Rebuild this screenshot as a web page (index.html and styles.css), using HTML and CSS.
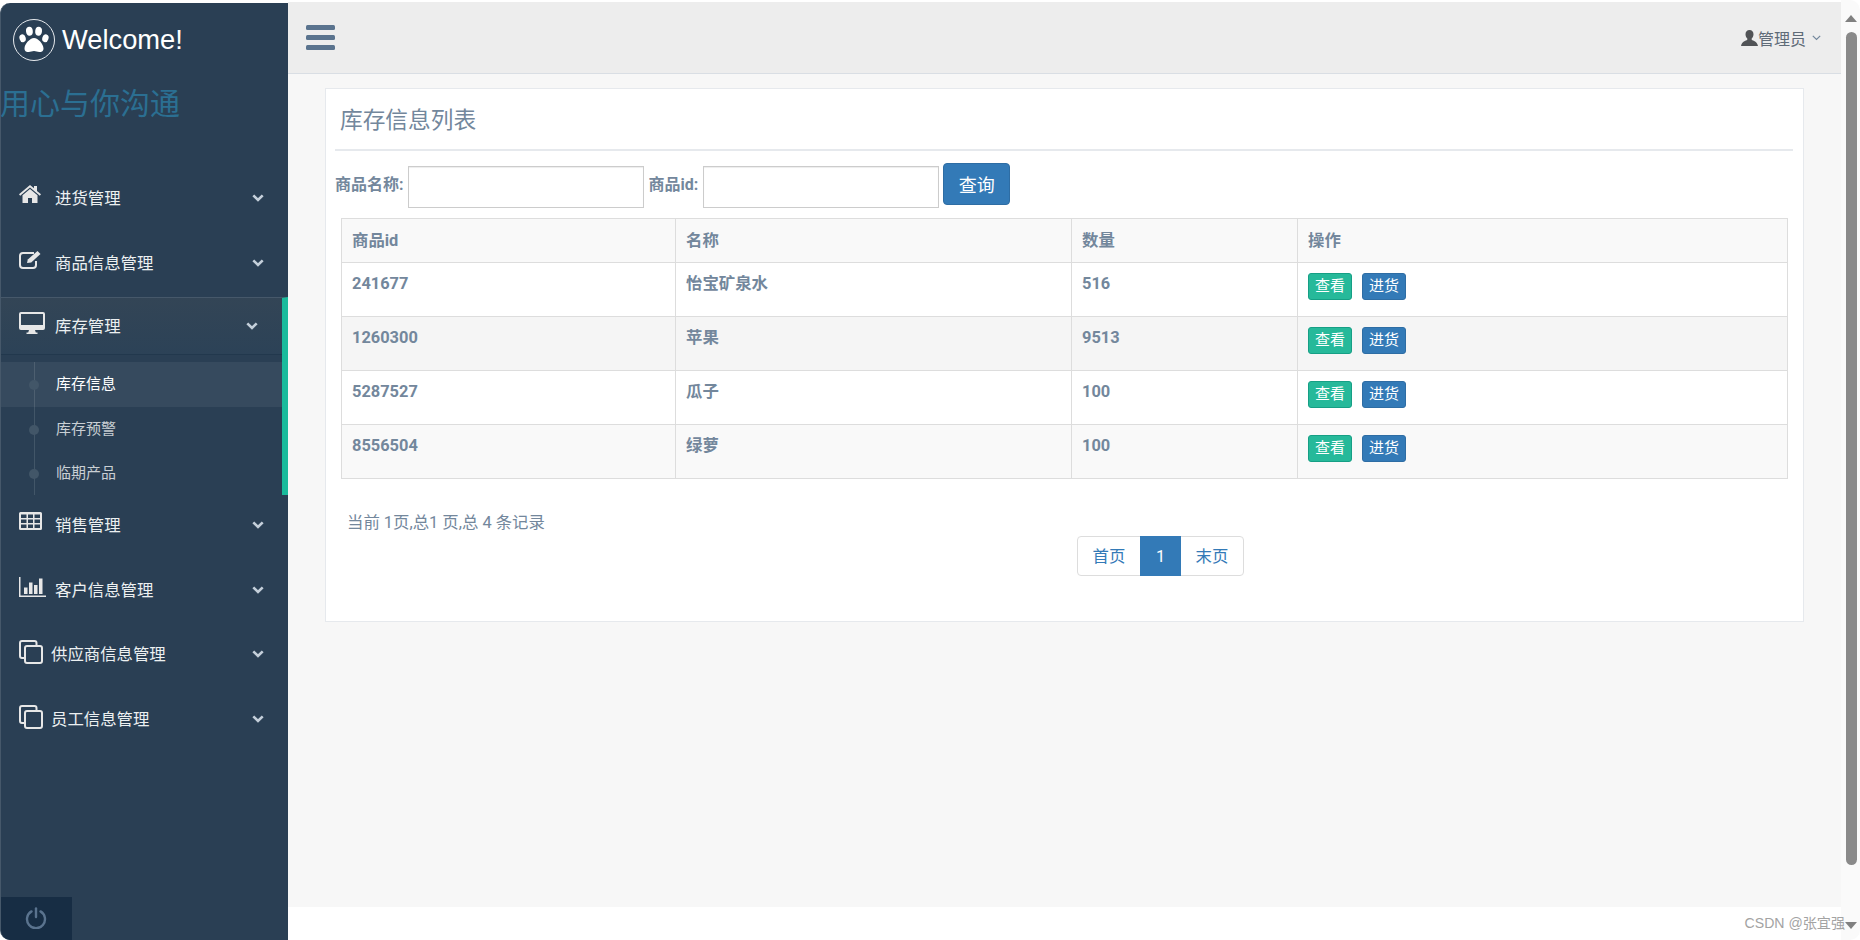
FILE: index.html

```html
<!DOCTYPE html>
<html>
<head>
  <meta charset="utf-8">
  <title>库存信息</title>
  <link rel="stylesheet" href="styles.css">
</head>
<body>
  <div class="sidebar">
    <div class="brand">
      <span class="brand-logo">
        <svg viewBox="0 0 32 32" width="32" height="32" fill="#fff">
          <ellipse cx="4.6" cy="14.2" rx="3.1" ry="4" transform="rotate(-18 4.6 14.2)"/>
          <ellipse cx="11.4" cy="7.2" rx="3.4" ry="4.5" transform="rotate(-6 11.4 7.2)"/>
          <ellipse cx="20.6" cy="7.2" rx="3.4" ry="4.5" transform="rotate(6 20.6 7.2)"/>
          <ellipse cx="27.4" cy="14.2" rx="3.1" ry="4" transform="rotate(18 27.4 14.2)"/>
          <path d="M16 14c-4 0-9.5 6-9.5 10.5 0 3 2.4 3.5 4.2 3.5 2 0 3.3-1 5.3-1s3.300 1 5.300 1c1.800 0 4.200-.5 4.200-3.500C25.500 20 20 14 16 14z"/>
        </svg>
      </span>
      <span class="brand-name">Welcome!</span>
    </div>
    <div class="tagline">用心与你沟通</div>

    <ul class="nav">
      <li class="nav-item">
        <svg class="nav-icon" viewBox="0 0 22 18" width="22" height="18" fill="#e7e7e7"><path d="M11 0 0 9.300l1.200 1.400L11 2.500l9.800 8.200 1.200-1.400-4-3.400V1h-3v2.300z"/><path d="M11 4 3.500 10.200V18H9v-5h4v5h5.500v-7.800z"/></svg>
        <span class="nav-label">进货管理</span>
        <svg class="chevron" viewBox="0 0 12 8" width="12" height="8"><path d="M1.300 1.300 6 6l4.700-4.700"/></svg>
      </li>
      <li class="nav-item">
        <svg class="nav-icon" viewBox="0 0 24 19" width="24" height="19" fill="none" stroke="#e7e7e7" stroke-width="2"><path d="M15 3H4a3 3 0 0 0-3 3v9a3 3 0 0 0 3 3h10a3 3 0 0 0 3-3v-4"/><path d="M8 13l.8-3.600L18.500 1l3 3-9.300 8.500z" fill="#e7e7e7" stroke="none"/></svg>
        <span class="nav-label">商品信息管理</span>
        <svg class="chevron" viewBox="0 0 12 8" width="12" height="8"><path d="M1.300 1.300 6 6l4.700-4.700"/></svg>
      </li>
      <li class="nav-open">
        <div class="nav-item nav-head">
          <svg class="nav-icon" viewBox="0 0 26 22" width="26" height="22" fill="#e7e7e7"><path d="M2 0h22a2 2 0 0 1 2 2v14a2 2 0 0 1-2 2h-8l.8 2.500h1.700V22H7.500v-1.500h1.700L10 18H2a2 2 0 0 1-2-2V2a2 2 0 0 1 2-2zm0 2v11h22V2z"/></svg>
          <span class="nav-label">库存管理</span>
          <svg class="chevron" viewBox="0 0 12 8" width="12" height="8"><path d="M1.300 1.300 6 6l4.700-4.700"/></svg>
        </div>
        <ul class="subnav">
          <li class="sub-item sub-active">库存信息</li>
          <li class="sub-item">库存预警</li>
          <li class="sub-item">临期产品</li>
        </ul>
      </li>
      <li class="nav-item">
        <svg class="nav-icon" viewBox="0 0 23 18" width="23" height="18" fill="#e7e7e7"><path fill-rule="evenodd" d="M1.500 0h20A1.500 1.500 0 0 1 23 1.500v15a1.500 1.500 0 0 1-1.500 1.500h-20A1.500 1.500 0 0 1 0 16.500v-15A1.500 1.500 0 0 1 1.500 0zM2 2.500V6h5.500V2.500zm7 0V6h5V2.500zm6.500 0V6H21V2.500zM2 7.500V11h5.500V7.500zm7 0V11h5V7.500zm6.500 0V11H21V7.500zM2 12.500V16h5.500v-3.500zm7 0V16h5v-3.500zm6.500 0V16H21v-3.500z"/></svg>
        <span class="nav-label">销售管理</span>
        <svg class="chevron" viewBox="0 0 12 8" width="12" height="8"><path d="M1.300 1.300 6 6l4.700-4.700"/></svg>
      </li>
      <li class="nav-item">
        <svg class="nav-icon" viewBox="0 0 27 20" width="27" height="20" fill="#e7e7e7"><path d="M0 0h1.500v18.500H27V20H0z"/><path d="M5 10.500h3.500V17H5zM10 5.500h3.500V17H10zM15 8h3.500v9H15zM20 1.500h3.500V17H20z"/></svg>
        <span class="nav-label">客户信息管理</span>
        <svg class="chevron" viewBox="0 0 12 8" width="12" height="8"><path d="M1.300 1.300 6 6l4.700-4.700"/></svg>
      </li>
      <li class="nav-item nav-clone">
        <svg class="nav-icon" viewBox="0 0 24 24" width="24" height="24" fill="none" stroke="#e7e7e7" stroke-width="2"><path d="M17.500 5V3a2 2 0 0 0-2-2H3a2 2 0 0 0-2 2v13a2 2 0 0 0 2 2h3"/><rect x="6" y="6" width="17" height="17" rx="2"/></svg>
        <span class="nav-label">供应商信息管理</span>
        <svg class="chevron" viewBox="0 0 12 8" width="12" height="8"><path d="M1.300 1.300 6 6l4.700-4.700"/></svg>
      </li>
      <li class="nav-item nav-clone">
        <svg class="nav-icon" viewBox="0 0 24 24" width="24" height="24" fill="none" stroke="#e7e7e7" stroke-width="2"><path d="M17.500 5V3a2 2 0 0 0-2-2H3a2 2 0 0 0-2 2v13a2 2 0 0 0 2 2h3"/><rect x="6" y="6" width="17" height="17" rx="2"/></svg>
        <span class="nav-label">员工信息管理</span>
        <svg class="chevron" viewBox="0 0 12 8" width="12" height="8"><path d="M1.300 1.300 6 6l4.700-4.700"/></svg>
      </li>
    </ul>

    <div class="sidebar-footer">
      <span class="power">
        <svg viewBox="0 0 22 22" width="22" height="22" fill="none" stroke="#5a738e" stroke-width="2.400" stroke-linecap="round"><path d="M6.500 4.400a9 9 0 1 0 9 0"/><path d="M11 1.500v8.500"/></svg>
      </span>
    </div>
  </div>

  <div class="main">
    <div class="topbar">
      <svg class="menu-toggle" viewBox="0 0 29 25" width="29" height="25" fill="#5a738e"><rect width="29" height="5" rx="1.500"/><rect y="10" width="29" height="5" rx="1.500"/><rect y="20" width="29" height="5" rx="1.500"/></svg>
      <div class="user-menu">
        <svg viewBox="0 0 17 16" width="17" height="16" fill="#515356"><path d="M8.500 0C6 0 4.500 1.800 4.500 4.300c0 1.800.8 3.300 1.800 4.300v1.200C4.800 11 .8 11.500 0 16h17c-.8-4.500-4.800-5-6.300-6.200V8.600c1-1 1.800-2.500 1.800-4.300C12.500 1.800 11 0 8.500 0z"/></svg>
        <span>管理员</span>
        <svg class="user-caret" viewBox="0 0 9 6" width="9" height="6"><path d="M.8.800 4.500 4.500 8.200.8"/></svg>
      </div>
    </div>

    <div class="content">
      <div class="panel">
        <div class="panel-title">库存信息列表</div>

        <form class="search">
          <label>商品名称:</label>
          <input type="text">
          <label class="label-id">商品id:</label>
          <input type="text">
          <button type="button" class="btn-search">查询</button>
        </form>

        <table class="stock-table">
          <thead>
            <tr><th class="col-id">商品id</th><th class="col-name">名称</th><th class="col-qty">数量</th><th>操作</th></tr>
          </thead>
          <tbody>
            <tr>
              <td>241677</td><td>怡宝矿泉水</td><td>516</td>
              <td><button class="btn-sm btn-view">查看</button><button class="btn-sm btn-stock">进货</button></td>
            </tr>
            <tr class="row-hover">
              <td>1260300</td><td>苹果</td><td>9513</td>
              <td><button class="btn-sm btn-view">查看</button><button class="btn-sm btn-stock">进货</button></td>
            </tr>
            <tr>
              <td>5287527</td><td>瓜子</td><td>100</td>
              <td><button class="btn-sm btn-view">查看</button><button class="btn-sm btn-stock">进货</button></td>
            </tr>
            <tr class="row-odd">
              <td>8556504</td><td>绿萝</td><td>100</td>
              <td><button class="btn-sm btn-view">查看</button><button class="btn-sm btn-stock">进货</button></td>
            </tr>
          </tbody>
        </table>

        <div class="page-info">当前 1页,总1 页,总 4 条记录</div>
        <ul class="pager">
          <li class="pager-wide">首页</li>
          <li class="pager-current">1</li>
          <li class="pager-wide">末页</li>
        </ul>
      </div>
    </div>
  </div>

  <div class="scrollbar">
    <span class="arrow-up"></span>
    <span class="thumb"></span>
    <span class="arrow-down"></span>
  </div>

  <div class="watermark">CSDN @张宜强</div>
</body>
</html>
```

FILE: styles.css

```css
* { box-sizing: border-box; }
html { height: 940px; overflow: hidden; }
body { margin: 0; height: 940px; overflow: hidden; display: flex; background: #fff; color: #73879C; font-family: Roboto, "Noto Sans CJK SC", sans-serif; font-size: 16.4px; }
ul { list-style: none; margin: 0; padding: 0; }

/* sidebar */
.sidebar { width: 288px; margin-top: 3px; height: 937px; flex-shrink: 0; display: flex; flex-direction: column; background: #2A3F54; border-left: 1px solid #46586a; border-radius: 10px 0 0 10px; color: #ECF0F1; overflow: hidden; }
.brand { display: flex; align-items: center; padding: 16px 0 0 12px; }
.brand-logo { width: 42px; height: 42px; border: 1px solid #e6e9ed; border-radius: 50%; display: flex; align-items: center; justify-content: center; }
.brand-name { margin-left: 7px; font-family: "Liberation Sans", sans-serif; font-size: 27.3px; color: #fff; }
.tagline { margin: 23px 0 0 -1px; font-size: 30px; line-height: 40px; color: #2B6F92; }

.nav { margin-top: 44px; }
.nav-item { height: 64.5px; padding: 18px 24px 0 18px; display: grid; grid-template-columns: 36px 1fr auto; align-items: start; }
.nav-clone { grid-template-columns: 32px 1fr auto; }
.nav-label { line-height: 24px; margin-top: 1px; }
.nav-icon { margin-top: -1px; }
.nav-clone .nav-icon, .nav-head .nav-icon { margin-top: -2px; }
.chevron { margin-top: 8px; fill: none; stroke: #C4CFDA; stroke-width: 2.6; }

.nav-open { margin-top: 0; border-right: 6px solid #1ABB9C; border-top: 1px solid #46586a; }
.nav-head { height: 57px; padding-top: 16px; border-bottom: 1px solid #22384d; background: linear-gradient(#334556, #2C4257); }
.subnav { margin-top: 7px; position: relative; height: 133px; }
.sub-item { height: 44.5px; padding-left: 55px; font-size: 15px; line-height: 44px; color: rgba(255, 255, 255, .75); position: relative; }
.sub-item:before { content: ""; position: absolute; left: 28px; top: 18px; width: 10px; height: 10px; border-radius: 50%; background: #425668; }
.sub-active { background: rgba(255, 255, 255, .06); color: #fff; }
.subnav:before { content: ""; position: absolute; left: 33px; top: 0; bottom: 0; width: 1px; background: #425668; }

.sidebar-footer { margin-top: auto; height: 43px; }
.power { width: 71px; height: 43px; padding: 0 2px 2px 0; background: #172D44; display: flex; align-items: center; justify-content: center; }

/* main area */
.main { flex: 1; min-width: 0; display: flex; flex-direction: column; padding-top: 2px; }
.topbar { height: 72px; flex-shrink: 0; padding: 0 20px 0 18px; display: flex; align-items: center; justify-content: space-between; background: #EDEDED; border-bottom: 1px solid #D9DEE4; }
.menu-toggle { margin-top: -1px; }
.user-menu { display: flex; align-items: center; color: #515356; }
.user-menu span { font-size: 16px; color: #5f6b78; }
.user-caret { margin-left: 6px; fill: none; stroke: #73879C; stroke-width: 1.200; }

.content { height: 833px; padding: 14px 37px 0 37px; background: #F7F7F7; }
.panel { height: 534px; padding: 0 10px 0 9px; background: #fff; border: 1px solid #E6E9ED; }
.panel-title { height: 62px; padding: 10px 0 0 5px; font-size: 22.7px; line-height: 44px; border-bottom: 2px solid #E6E9ED; }

.search { display: flex; align-items: flex-start; margin-top: 12px; height: 45px; }
.search label { font-size: 16px; font-weight: bold; line-height: 44px; margin-right: 4px; }
.search .label-id { margin-left: 5px; margin-right: 5px; }
.search input { width: 236px; height: 42px; margin-top: 3px; padding: 0 8px; border: 1px solid #ccc; box-shadow: inset 0 1px 1px rgba(0, 0, 0, .075); outline: 0; }
.btn-search { width: 67px; height: 42px; margin-left: 4px; padding: 0; font: 18px Roboto, "Noto Sans CJK SC", sans-serif; color: #fff; background: #337ab7; border: 1px solid #2e6da4; border-radius: 4px; }

.stock-table { width: 1447px; margin: 10px 0 0 6px; border-collapse: collapse; table-layout: fixed; font-weight: bold; }
.stock-table th, .stock-table td { padding: 9px 10px; border: 1px solid #ddd; text-align: left; vertical-align: top; line-height: 24px; }
.stock-table th { height: 44px; padding-top: 10px; background: #f9f9f9; }
.stock-table td { height: 54px; }
.col-id { width: 334px; }
.col-name { width: 396px; }
.col-qty { width: 226px; }
.row-hover td { background: #f5f5f5; }
.row-odd td { background: #f9f9f9; }

.btn-sm { height: 27px; padding: 0 6px; margin-top: 1px; margin-right: 10px; font: 15px/25px Roboto, "Noto Sans CJK SC", sans-serif; color: #fff; border-radius: 3px; border: 1px solid; vertical-align: top; }
.btn-view { background: #26B99A; border-color: #169F85; }
.btn-stock { background: #337ab7; border-color: #2e6da4; }

.page-info { margin: 32px 0 0 12px; line-height: 24px; }
.pager { display: flex; width: 167px; height: 40px; margin: 1px 0 0 742px; border: 1px solid #ddd; border-radius: 4px; color: #337ab7; line-height: 40px; text-align: center; }
.pager-wide { flex: 1; }
.pager-current { width: 41px; height: 40px; margin: -1px 0; line-height: 42px; color: #fff; background: #337ab7; }

/* fake browser scrollbar */
.scrollbar { width: 19px; flex-shrink: 0; padding: 15px 3px 0 4px; background: #FAFAFA; border-radius: 0 10px 10px 0; display: flex; flex-direction: column; align-items: center; }
.arrow-up { border: 6.500px solid transparent; border-top: 0; border-bottom: 7px solid #808080; }
.thumb { width: 11px; height: 833px; margin-top: 10px; background: #8a8a8a; border-radius: 6px; }
.arrow-down { margin-top: 57px; border: 6.500px solid transparent; border-bottom: 0; border-top: 7px solid #808080; }

.watermark { position: absolute; right: 15px; top: 914px; font-family: "Liberation Sans", "Noto Sans CJK SC", sans-serif; font-size: 14.100px; line-height: 18px; color: #a3a3a3; }
```
